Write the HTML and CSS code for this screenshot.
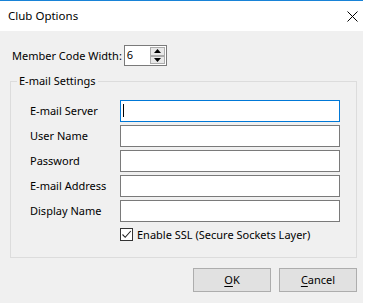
FILE: index.html
```html
<!DOCTYPE html>
<html>
<head>
<meta charset="utf-8">
<link rel="stylesheet" href="styles.css">
</head>
<body>
<div class="window">
  <div class="titlebar">
    <span class="title">Club Options</span>
    <svg class="close" width="11" height="11" viewBox="0 0 11 11"><path d="M0.5 0.5 L10.5 10.5 M10.5 0.5 L0.5 10.5" stroke="#000" stroke-width="1" fill="none"/></svg>
  </div>
  <div class="client">
    <div class="member-row">
      <span class="lbl">Member Code Width:</span>
      <div class="spinner">
        <span class="val">6</span>
        <div class="spin-btns">
          <div class="spin-btn"><svg width="7" height="4" viewBox="0 0 7 4"><path d="M3.5 0 L7 4 L0 4 Z" fill="#000"/></svg></div>
          <div class="spin-btn"><svg width="7" height="4" viewBox="0 0 7 4"><path d="M0 0 L7 0 L3.5 4 Z" fill="#000"/></svg></div>
        </div>
      </div>
    </div>
    <fieldset class="group">
      <legend>E-mail Settings</legend>
      <div class="form">
        <span class="lbl">E-mail Server</span><div class="field focus"><span class="caret"></span></div>
        <span class="lbl">User Name</span><div class="field"></div>
        <span class="lbl">Password</span><div class="field"></div>
        <span class="lbl">E-mail Address</span><div class="field"></div>
        <span class="lbl">Display Name</span><div class="field"></div>
        <span></span>
        <div class="check-row">
          <span class="checkbox"><svg width="11" height="11" viewBox="0 0 11 11"><path d="M1.5 5.5 L4.2 8.3 L9.8 2" stroke="#222" stroke-width="1.1" fill="none"/></svg></span>
          <span class="lbl">Enable SSL (Secure Sockets Layer)</span>
        </div>
      </div>
    </fieldset>
    <div class="buttons">
      <div class="btn"><u>O</u>K</div>
      <div class="btn"><u>C</u>ancel</div>
    </div>
  </div>
</div>
</body>
</html>
```

FILE: styles.css
```css
html, body {
  margin: 0;
  padding: 0;
  background: #ffffff;
}
body {
  font-family: "Noto Sans", "Open Sans", sans-serif;
  font-size: 11px;
  color: #000;
}
.window {
  width: 363px;
  height: 302px;
  background: #f0f0f0;
  border-top: 1px solid #1883d7;
}
.titlebar {
  height: 30px;
  background: #fff;
  display: flex;
  align-items: center;
  justify-content: space-between;
  padding: 0 5px 0 8px;
}
.title {
  font-size: 11.5px;
  line-height: 16px;
}
.close {
  display: block;
}
.client {
  padding: 14px 6px 0 10px;
}
.member-row {
  display: flex;
  align-items: center;
  height: 21px;
  padding-left: 2px;
  gap: 2px;
}
.lbl {
  line-height: 16px;
  white-space: nowrap;
}
.spinner {
  width: 43px;
  height: 21px;
  box-sizing: border-box;
  border: 1px solid #7a7a7a;
  background: #fff;
  display: flex;
  justify-content: space-between;
}
.val {
  padding-left: 2px;
  line-height: 18px;
}
.spin-btns {
  width: 15px;
  display: flex;
  flex-direction: column;
  padding: 1px;
}
.spin-btn {
  flex: 1;
  background: #e8e8e8;
  border: 1px solid #acacac;
  display: flex;
  align-items: center;
  justify-content: center;
}
.group {
  margin: 7px 0 0 0;
  padding: 11px 0 10px 0;
  border: 1px solid #dcdcdc;
  min-width: 0;
}
.group legend {
  padding: 0 2px;
  margin-left: 6px;
  line-height: 16px;
}
.form {
  display: grid;
  grid-template-columns: 90px 220px;
  grid-auto-rows: 22px;
  row-gap: 3px;
  align-items: center;
  margin-left: 19px;
}
.form > .check-row {
  height: 19px;
}
.field {
  height: 22px;
  box-sizing: border-box;
  border: 1px solid #7a7a7a;
  background: #fff;
  position: relative;
}
.field.focus {
  border-color: #0078d7;
}
.caret {
  position: absolute;
  left: 2px;
  top: 3px;
  width: 1px;
  height: 13px;
  background: #000;
}
.check-row {
  display: flex;
  align-items: center;
  gap: 4px;
  align-self: start;
}
.checkbox {
  width: 13px;
  height: 13px;
  box-sizing: border-box;
  border: 1px solid #333;
  background: #fff;
  display: flex;
  align-items: center;
  justify-content: center;
}
.checkbox svg {
  display: block;
}
.buttons {
  display: flex;
  justify-content: flex-end;
  gap: 8px;
  margin-top: 10px;
}
.btn {
  width: 78px;
  height: 24px;
  box-sizing: border-box;
  border: 1px solid #adadad;
  background: #e1e1e1;
  display: flex;
  align-items: center;
  justify-content: center;
  line-height: 16px;
}
.btn u {
  text-decoration-thickness: 1px;
  text-underline-offset: 2px;
}
```
